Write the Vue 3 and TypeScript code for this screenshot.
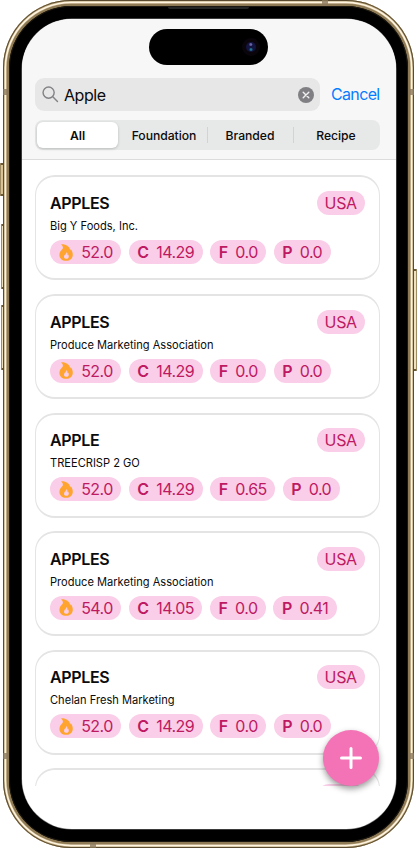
<script setup lang="ts">
interface Food {
  name: string
  brand: string
  energy: string
  carbs: string
  fat: string
  protein: string
}

const tabs: string[] = ['All', 'Foundation', 'Branded', 'Recipe']

const foods: Food[] = [
  { name: 'APPLES', brand: 'Big Y Foods, Inc.', energy: '52.0', carbs: '14.29', fat: '0.0', protein: '0.0' },
  { name: 'APPLES', brand: 'Produce Marketing Association', energy: '52.0', carbs: '14.29', fat: '0.0', protein: '0.0' },
  { name: 'APPLE', brand: 'TREECRISP 2 GO', energy: '52.0', carbs: '14.29', fat: '0.65', protein: '0.0' },
  { name: 'APPLES', brand: 'Produce Marketing Association', energy: '54.0', carbs: '14.05', fat: '0.0', protein: '0.41' },
  { name: 'APPLES', brand: 'Chelan Fresh Marketing', energy: '52.0', carbs: '14.29', fat: '0.0', protein: '0.0' },
]

const nutrients = (f: Food) => [
  { key: 'C', value: f.carbs },
  { key: 'F', value: f.fat },
  { key: 'P', value: f.protein },
]
</script>

<template>
  <div class="stage">
    <i class="key action"></i>
    <i class="key up"></i>
    <i class="key down"></i>
    <i class="key power"></i>
    <div class="phone">
      <i class="seam s1"></i><i class="seam s2"></i><i class="seam s3"></i>
      <i class="seam s4"></i><i class="seam s5"></i><i class="seam s6"></i>
      <div class="bezel">
        <i class="speaker"></i>
        <div class="screen">
          <div class="island"><i class="lens"></i></div>
          <header class="top">
            <div class="search-row">
              <div class="search">
                <svg class="glass" viewBox="0 0 18 18"><circle cx="7" cy="7" r="5.9" /><path d="M11.4 11.4L16.4 16.4" /></svg>
                <span class="query">Apple</span>
                <svg class="clear" viewBox="0 0 16 16"><circle cx="8" cy="8" r="8" /><path d="M5.2 5.2l5.6 5.6M10.8 5.2l-5.6 5.6" /></svg>
              </div>
              <span class="cancel">Cancel</span>
            </div>
            <div class="segments">
              <div v-for="(tab, i) in tabs" :key="tab" class="segment" :class="{ active: i === 0, split: i > 1 }">{{ tab }}</div>
            </div>
          </header>
          <main class="list">
            <article v-for="(food, i) in foods" :key="i" class="card">
              <div class="head">
                <span class="name">{{ food.name }}</span>
                <span class="pill country">USA</span>
              </div>
              <div class="brand">{{ food.brand }}</div>
              <div class="pills">
                <span class="pill energy">
                  <svg class="flame" viewBox="0 0 14 17">
                    <path fill-rule="evenodd" d="M2.1 .4C6.8 .1 10.8 2.5 11.2 6.6C11.5 6.1 11.6 5.6 11.6 5.1C13.1 6.8 13.8 8.9 13.8 10.7C13.8 14.3 11 16.8 7.1 16.8C3.1 16.8 .4 14.3 .4 10.9C.4 8 2.2 6.3 3.7 4.7C4.3 3.2 3.7 1.5 2.1 .4ZM7.6 8.1C7.7 10 5 10.6 5 12.7C5 14 5.9 14.8 7.3 14.8C8.8 14.8 9.8 13.9 9.8 12.5C9.8 11.7 9.5 11 9.1 10.5C9 10.9 8.8 11.1 8.5 11.3C8.6 10 8.4 8.8 7.6 8.1Z" />
                  </svg>
                  <span>{{ food.energy }}</span>
                </span>
                <span v-for="n in nutrients(food)" :key="n.key" class="pill"><b>{{ n.key }}</b><span>{{ n.value }}</span></span>
              </div>
            </article>
            <article class="card partial"><span class="pill country"></span></article>
          </main>
          <div class="add"><svg viewBox="0 0 22 22"><path d="M11 1.5v19M1.5 11h19" /></svg></div>
        </div>
      </div>
    </div>
  </div>
</template>

<style>
body { margin: 0; background: #fff; overflow: hidden; }
</style>

<style scoped>
* { box-sizing: border-box; }
.stage { position: relative; width: 418px; height: 850px; overflow: hidden; padding: 0 4px 0 3px; font-family: Inter, "Liberation Sans", sans-serif; color: #0b0b0b; }
.phone {
  position: relative; width: 411px; height: 848px; padding: 6px; border-radius: 68px; background: #8e7a55;
  box-shadow: inset 0 0 0 1px #5a4a30, inset 0 0 0 1.6px #b9a57a, inset 0 0 0 3.2px #fff4e0, inset 0 0 0 3.8px #b6a078;
}
.bezel { position: relative; height: 836px; padding: 12.5px 12.5px 13px 13px; border-radius: 62px; background: #000; box-shadow: inset 0 0 0 1px #1c1811; }
.speaker { position: absolute; left: 159px; top: 1px; width: 81px; height: 2px; border-radius: 0 0 2px 2px; background: #232625; }
.screen { position: relative; width: 373.5px; height: 810.5px; border-radius: 50px; background: #fff; overflow: hidden; display: flex; flex-direction: column; box-shadow: 0 0 0 .5px #777; }
.key { position: absolute; width: 4px; border: 1px solid #a08c62; border-top: 2px solid #6b5936; border-bottom: 2px solid #6b5936; background: #f1e2bf; border-radius: 1px; }
.action { left: 0; top: 163px; height: 33px; background: #d9c394; }
.up { left: 1px; top: 224px; height: 65px; }
.down { left: 1px; top: 305px; height: 65px; }
.power { left: 413px; top: 269px; height: 102px; }
.seam { position: absolute; background: #8d7a5e; opacity: .8; }
.s1 { left: 0; top: 89px; width: 6px; height: 6px; }
.s2 { right: 0; top: 89px; width: 6px; height: 6px; }
.s3 { left: 0; top: 753px; width: 6px; height: 6px; }
.s4 { right: 0; top: 753px; width: 6px; height: 6px; }
.s5 { left: 319px; top: 0; width: 6px; height: 6px; }
.s6 { left: 87px; bottom: 0; width: 6px; height: 6px; }
.island { position: absolute; left: 127px; top: 10.5px; width: 119px; height: 36px; border-radius: 18px; background: #000; }
.lens { position: absolute; right: 12px; top: 13px; width: 10px; height: 10px; border-radius: 50%; background: radial-gradient(circle at 48% 25%, #6a62a8 0 .8px, transparent 2px), radial-gradient(circle at 50% 75%, #1f7590 0 .8px, transparent 2px), #141440; box-shadow: 0 0 0 4px #09050b; }
.top { flex: none; height: 141.5px; padding: 59.5px 15.5px 0 13px; background: #f7f7f7; border-bottom: 1px solid #dcdcdc; }
.search-row { display: flex; align-items: center; gap: 11px; height: 33px; }
.search { flex: none; display: flex; align-items: center; width: 285px; height: 33px; padding: 0 6.5px 0 7px; border-radius: 9px; background: #e7e7e7; }
.glass { width: 17px; height: 17px; fill: none; stroke: #838387; stroke-width: 1.5; stroke-linecap: round; }
.query { flex: 1; margin-left: 5px; font-size: 16px; letter-spacing: -.45px; line-height: 20px; }
.clear { width: 16px; height: 16px; fill: #808084; }
.clear path { stroke: #f0f0f0; stroke-width: 1.4; stroke-linecap: round; }
.cancel { color: #087cff; font-size: 16px; letter-spacing: -.65px; white-space: nowrap; line-height: 20px; margin-top: -2px; }
.segments { display: grid; grid-template-columns: repeat(4, 86px); height: 30px; margin-top: 9px; padding: 2px 0; border-radius: 8px; background: #e7e8e8; }
.segment { position: relative; display: flex; align-items: center; justify-content: center; font-size: 12.2px; font-weight: 500; letter-spacing: -.05px; }
.active { width: 81px; margin-left: 2px; background: #fff; border-radius: 6px; font-weight: 600; box-shadow: 0 1px 3px #0003; }
.split::before { content: ""; position: absolute; left: 0; top: 5px; width: 1px; height: 16px; background: #d2d3d3; }
.list { height: 626px; flex: none; padding: 15.4px 15.5px 0 13px; overflow: hidden; display: flex; flex-direction: column; gap: 13.6px; }
.card { flex: none; height: 105px; padding: 13.7px 13.5px 0 13.5px; border: 2px solid #e4e4e4; border-left-width: 1.5px; border-right-width: 1.5px; border-radius: 20px; background: #fff; }
.head { display: flex; align-items: center; justify-content: space-between; height: 24px; }
.name { font-size: 16px; font-weight: 600; letter-spacing: -.35px; margin-left: .5px; }
.brand { height: 15px; line-height: 15px; margin: 4px 0 0 .5px; font-size: 11.1px; }
.pills { display: flex; gap: 7.5px; margin: 6px 0 0 .5px; }
.pill { display: inline-flex; flex: none; align-items: center; height: 24px; padding: 0 8.5px 0 8.5px; border-radius: 12px; background: #facee8; color: #bd1a62; font-size: 16px; letter-spacing: -.55px; gap: 7.8px; white-space: nowrap; }
.pill b { font-weight: 600; }
.country { width: 48px; justify-content: center; padding: 0; letter-spacing: -.35px; margin-right: .8px; }
.energy { padding-left: 8.5px; gap: 8.7px; }
.flame { width: 14px; height: 17px; fill: #ffa52f; }
.partial .country { display: flex; margin-left: auto; }
.add { position: absolute; left: 301px; top: 711.5px; width: 56px; height: 56px; display: grid; place-items: center; border-radius: 50%; background: #f472b6; box-shadow: 0 3px 6px #0006; }
.add svg { width: 22px; height: 22px; fill: none; stroke: #fff; stroke-width: 3; stroke-linecap: round; }
</style>
